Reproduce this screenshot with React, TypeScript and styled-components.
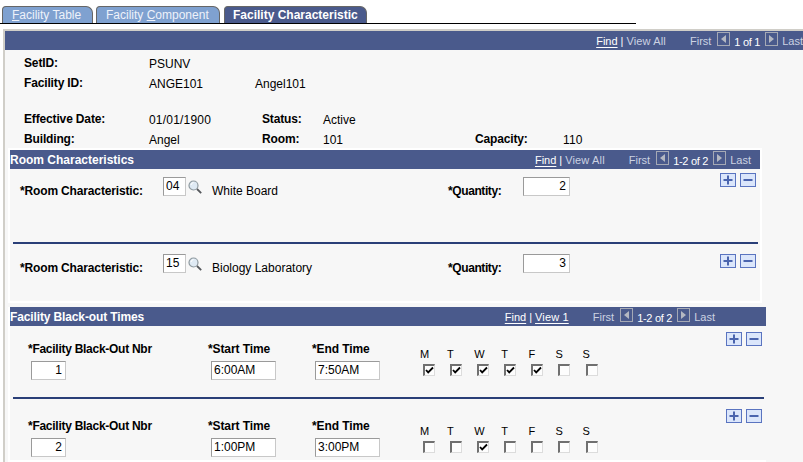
import React from "react";
import styled, { createGlobalStyle } from "styled-components";

const Global = createGlobalStyle`
  html, body { margin: 0; padding: 0; background: #fff; }
  body { font-family: "Liberation Sans", Arial, sans-serif; font-size: 12px; color: #000; }
`;

const Page = styled.div`
  width: 803px;
  height: 462px;
  overflow: hidden;
  background: #fff;
`;

const TabBar = styled.div`
  display: flex;
  align-items: flex-end;
  width: 634px;
  height: 17px;
  padding: 6px 0 0 2px;
  border-bottom: 1px solid #000;
`;

const Tab = styled.div<{ $active?: boolean; $w: number; $ml?: number }>`
  box-sizing: border-box;
  width: ${(p) => p.$w}px;
  height: 17px;
  margin-left: ${(p) => p.$ml ?? 0}px;
  padding-left: ${(p) => (p.$active ? 8 : 9)}px;
  background: ${(p) => (p.$active ? "#4a5a8c" : "#7fa1d0")};
  color: ${(p) => (p.$active ? "#fff" : "#eef2fa")};
  font-weight: ${(p) => (p.$active ? "bold" : "normal")};
  line-height: 16px;
  border: 1px solid #666;
  border-bottom: none;
  border-radius: 4px 7px 0 0;
  white-space: nowrap;
  u { text-decoration-thickness: 1px; }
`;

const Panel = styled.div`
  margin: 5px 0 0 3px;
  height: 438px;
  background: #f7f7f7;
  border-top: 2px solid #d0cec8;
  border-left: 2px solid #d0cec8;
`;

const Header = styled.div<{ $pr: number }>`
  display: flex;
  align-items: center;
  justify-content: space-between;
  box-sizing: border-box;
  height: 19px;
  padding-right: ${(p) => p.$pr}px;
  background: #4a5a8c;
  color: #fff;
`;

const Title = styled.div<{ $tight?: boolean }>`
  font-weight: bold;
  letter-spacing: ${(p) => (p.$tight ? "-0.13px" : "0")};
  white-space: nowrap;
`;

const Nav = styled.div`
  display: flex;
  align-items: center;
  color: #ccd2e2;
  font-size: 11px;
  white-space: nowrap;
`;

const NavLink = styled.span`
  color: #fff;
  text-decoration: underline;
  text-underline-offset: 2px;
`;

const NavView = styled.span`
  letter-spacing: 0.15px;
`;

const NavViewLink = styled(NavLink)`
  letter-spacing: 0.15px;
`;

const NavSep = styled.span`
  margin: 0 3px;
  color: #fff;
`;

const NavFirst = styled.span`
  margin-left: 24px;
`;

const NavCount = styled.span`
  margin: 2px 5px 0 4px;
  color: #fff;
  letter-spacing: -0.28px;
`;

const NavIconBox = styled.svg`
  display: block;
  width: 13px;
  height: 14px;
  margin: -4px 0 0 0;
  flex: none;
`;

const NavPrev = styled(NavIconBox)`
  margin-left: 6px;
`;

const NavNext = styled(NavIconBox)`
  margin-right: 4px;
`;

const Info = styled.div`
  box-sizing: border-box;
  height: 98px;
  padding-top: 3px;
`;

const InfoRow = styled.div<{ $mt?: number }>`
  display: flex;
  align-items: center;
  height: 20px;
  margin-top: ${(p) => p.$mt ?? 0}px;
  padding-left: 19px;
`;

const InfoLabel = styled.div<{ $w: number }>`
  width: ${(p) => p.$w}px;
  flex: none;
  font-weight: bold;
  letter-spacing: -0.15px;
  white-space: nowrap;
`;

const InfoValue = styled.div<{ $w: number; $wide?: boolean }>`
  width: ${(p) => p.$w}px;
  flex: none;
  margin-top: 2px;
  letter-spacing: ${(p) => (p.$wide ? "0.2px" : "0")};
  white-space: nowrap;
`;

const Section = styled.div<{ $w: number; $white?: boolean; $mt?: number }>`
  width: ${(p) => p.$w}px;
  margin: ${(p) => p.$mt ?? 0}px 0 0 3px;
  padding: ${(p) => (p.$white ? "2px 2px 2px 2px" : "0 0 2px 2px")};
  background: #fff;
`;

const Rows = styled.div`
  background: #f7f7f7;
`;

const Separator = styled.div`
  height: 2px;
  margin: 0 2px 0 3px;
  background: #2a3f78;
`;

const RoomRow = styled.div<{ $h: number }>`
  display: flex;
  align-items: flex-start;
  height: ${(p) => p.$h}px;
  padding-left: 10px;
`;

const FieldLabel = styled.div<{ $w: number; $mt: number; $ls?: number }>`
  width: ${(p) => p.$w}px;
  flex: none;
  margin-top: ${(p) => p.$mt}px;
  font-weight: bold;
  letter-spacing: ${(p) => p.$ls ?? -0.15}px;
  line-height: 14px;
  white-space: nowrap;
`;

const TextBox = styled.input<{ $w: number; $right?: boolean; $mt?: number; $ml?: number }>`
  box-sizing: border-box;
  display: block;
  flex: none;
  width: ${(p) => p.$w}px;
  height: 19px;
  margin: ${(p) => p.$mt ?? 0}px 0 0 ${(p) => p.$ml ?? 0}px;
  padding: 0 ${(p) => (p.$right ? 3 : 2)}px 1px 2px;
  background: #fff;
  border: 1px solid #c8c8c8;
  border-top-color: #9a9a9a;
  border-left-color: #9a9a9a;
  border-radius: 0;
  outline: none;
  color: #000;
  font: 12px "Liberation Sans", Arial, sans-serif;
  text-align: ${(p) => (p.$right ? "right" : "left")};
`;

const Lens = styled.svg<{ $mt: number }>`
  display: block;
  flex: none;
  width: 14px;
  height: 14px;
  margin: ${(p) => p.$mt}px 0 0 2px;
`;

const Description = styled.div<{ $w: number; $mt: number }>`
  width: ${(p) => p.$w}px;
  flex: none;
  margin: ${(p) => p.$mt}px 0 0 10px;
  line-height: 14px;
  white-space: nowrap;
`;

const RowButtons = styled.div<{ $mt: number }>`
  display: flex;
  gap: 4px;
  margin: ${(p) => p.$mt}px 4px 0 auto;
`;

const RowButton = styled.button`
  display: block;
  box-sizing: border-box;
  width: 16px;
  height: 14px;
  padding: 0;
  background: #dbe6fb;
  border: 1px solid #5a74c0;
  border-radius: 0;
  svg { display: block; width: 14px; height: 12px; }
`;

const BlackRow = styled.div<{ $h: number; $pt: number }>`
  display: flex;
  align-items: flex-start;
  box-sizing: border-box;
  height: ${(p) => p.$h}px;
  padding: ${(p) => p.$pt}px 0 0 18px;
`;

const Column = styled.div<{ $w: number }>`
  width: ${(p) => p.$w}px;
  flex: none;
  margin-top: 10px;
`;

const ColumnLabel = styled.div<{ $tight?: boolean }>`
  height: 14px;
  margin-bottom: 5px;
  font-weight: bold;
  letter-spacing: ${(p) => (p.$tight ? "-0.27px" : "-0.1px")};
  line-height: 14px;
  white-space: nowrap;
`;

const Days = styled.div`
  display: flex;
  flex: none;
  margin-top: 15px;
`;

const Day = styled.div`
  width: 27.1px;
  flex: none;
`;

const DayLabel = styled.div`
  height: 14px;
  margin-bottom: 3px;
  font-size: 11px;
  line-height: 14px;
`;

const Check = styled.div`
  box-sizing: border-box;
  width: 12px;
  height: 12px;
  margin-left: 3px;
  background: #fdfdfd;
  border: 1px solid #dcdcdc;
  border-top: 2px solid #707070;
  border-left: 2px solid #707070;
  svg { display: block; width: 9px; height: 9px; }
`;

const PrevIcon = () => (
  <NavPrev viewBox="0 0 13 14">
    <rect x="0.5" y="0.5" width="12" height="13" fill="none" stroke="#a5a9b5" />
    <path d="M9 3v8L4 7z" fill="#b4b8c2" />
  </NavPrev>
);

const NextIcon = () => (
  <NavNext viewBox="0 0 13 14">
    <rect x="0.5" y="0.5" width="12" height="13" fill="none" stroke="#a5a9b5" />
    <path d="M4 3v8l5-4z" fill="#b4b8c2" />
  </NavNext>
);

const Pager: React.FC<{ count: string; view: string; viewLink?: boolean }> = ({ count, view, viewLink }) => (
  <Nav>
    <NavLink>Find</NavLink>
    <NavSep>|</NavSep>
    {viewLink ? <NavViewLink>{view}</NavViewLink> : <NavView>{view}</NavView>}
    <NavFirst>First</NavFirst>
    <PrevIcon />
    <NavCount>{count}</NavCount>
    <NextIcon />
    <span>Last</span>
  </Nav>
);

const Magnifier: React.FC<{ mt: number }> = ({ mt }) => (
  <Lens $mt={mt} viewBox="0 0 14 14">
    <circle cx="5.5" cy="5.5" r="4.5" fill="#dfeaf4" stroke="#8f9aa0" strokeWidth="1.2" />
    <path d="M3 5a3 3 0 0 1 2.5-2.5" fill="none" stroke="#fff" strokeWidth="1" />
    <path d="M9 9l4.2 4.2" stroke="#55585c" strokeWidth="1.8" />
  </Lens>
);

const Buttons: React.FC<{ mt: number }> = ({ mt }) => (
  <RowButtons $mt={mt}>
    <RowButton aria-label="Add row">
      <svg viewBox="0 0 14 12">
        <path d="M7 1.5v9M2.5 6h9" stroke="#4a64ae" strokeWidth="2" />
      </svg>
    </RowButton>
    <RowButton aria-label="Delete row">
      <svg viewBox="0 0 14 12">
        <path d="M2.5 6h9" stroke="#4a64ae" strokeWidth="2" />
      </svg>
    </RowButton>
  </RowButtons>
);

const DAYS = ["M", "T", "W", "T", "F", "S", "S"];

const DayChecks: React.FC<{ on: boolean[] }> = ({ on }) => (
  <Days>
    {DAYS.map((d, i) => (
      <Day key={i}>
        <DayLabel>{d}</DayLabel>
        <Check>
          {on[i] && (
            <svg viewBox="0 0 9 9">
              <path d="M1 4l2.2 2.4L8 1.5" fill="none" stroke="#000" strokeWidth="1.8" />
            </svg>
          )}
        </Check>
      </Day>
    ))}
  </Days>
);

const RoomLine: React.FC<{ h: number; top: number; btn: number; code: string; text: string; qty: string }> = ({
  h,
  top,
  btn,
  code,
  text,
  qty,
}) => (
  <RoomRow $h={h}>
    <FieldLabel $w={143} $mt={top + 7}>
      *Room Characteristic:
    </FieldLabel>
    <TextBox readOnly value={code} $w={23} $mt={top} />
    <Magnifier mt={top + 3} />
    <Description $w={236} $mt={top + 7}>
      {text}
    </Description>
    <FieldLabel $w={75} $mt={top + 7} $ls={-0.4}>
      *Quantity:
    </FieldLabel>
    <TextBox readOnly value={qty} $w={47} $right $mt={top} />
    <Buttons mt={btn} />
  </RoomRow>
);

const BlackLine: React.FC<{ h: number; pt: number; nbr: string; start: string; end: string; on: boolean[] }> = ({
  h,
  pt,
  nbr,
  start,
  end,
  on,
}) => (
  <BlackRow $h={h} $pt={pt}>
    <Column $w={180}>
      <ColumnLabel $tight>*Facility Black-Out Nbr</ColumnLabel>
      <TextBox readOnly value={nbr} $w={35} $right $ml={3} />
    </Column>
    <Column $w={104}>
      <ColumnLabel>*Start Time</ColumnLabel>
      <TextBox readOnly value={start} $w={65} $ml={3} />
    </Column>
    <Column $w={108}>
      <ColumnLabel>*End Time</ColumnLabel>
      <TextBox readOnly value={end} $w={65} $ml={3} />
    </Column>
    <DayChecks on={on} />
    <Buttons mt={0} />
  </BlackRow>
);

export default function App() {
  return (
    <Page>
      <Global />
      <TabBar>
        <Tab $w={91}>
          <u>F</u>acility Table
        </Tab>
        <Tab $w={124} $ml={3}>
          Facility <u>C</u>omponent
        </Tab>
        <Tab $active $w={143} $ml={4}>
          Facility Characteristic
        </Tab>
      </TabBar>
      <Panel>
        <Header $pr={0}>
          <span />
          <Pager count="1 of 1" view="View All" />
        </Header>
        <Info>
          <InfoRow>
            <InfoLabel $w={125}>SetID:</InfoLabel>
            <InfoValue $w={106}>PSUNV</InfoValue>
          </InfoRow>
          <InfoRow>
            <InfoLabel $w={125}>Facility ID:</InfoLabel>
            <InfoValue $w={106}>ANGE101</InfoValue>
            <InfoValue $w={100}>Angel101</InfoValue>
          </InfoRow>
          <InfoRow $mt={16}>
            <InfoLabel $w={125}>Effective Date:</InfoLabel>
            <InfoValue $w={113} $wide>
              01/01/1900
            </InfoValue>
            <InfoLabel $w={61}>Status:</InfoLabel>
            <InfoValue $w={100}>Active</InfoValue>
          </InfoRow>
          <InfoRow>
            <InfoLabel $w={125}>Building:</InfoLabel>
            <InfoValue $w={113}>Angel</InfoValue>
            <InfoLabel $w={61}>Room:</InfoLabel>
            <InfoValue $w={152}>101</InfoValue>
            <InfoLabel $w={88}>Capacity:</InfoLabel>
            <InfoValue $w={40} $wide>
              110
            </InfoValue>
          </InfoRow>
        </Info>
        <Section $w={750} $white>
          <Header $pr={9}>
            <Title>Room Characteristics</Title>
            <Pager count="1-2 of 2" view="View All" />
          </Header>
          <Rows>
            <RoomLine h={73} top={8} btn={4} code="04" text="White Board" qty="2" />
            <Separator />
            <RoomLine h={57} top={10} btn={10} code="15" text="Biology Laboratory" qty="3" />
          </Rows>
        </Section>
        <Section $w={756} $mt={4}>
          <Header $pr={51}>
            <Title $tight>Facility Black-out Times</Title>
            <Pager count="1-2 of 2" view="View 1" viewLink />
          </Header>
          <Rows>
            <BlackLine h={71} pt={6} nbr="1" start="6:00AM" end="7:50AM" on={[true, true, true, true, true, false, false]} />
            <Separator />
            <BlackLine h={61} pt={10} nbr="2" start="1:00PM" end="3:00PM" on={[false, false, true, false, false, false, false]} />
          </Rows>
        </Section>
      </Panel>
    </Page>
  );
}
